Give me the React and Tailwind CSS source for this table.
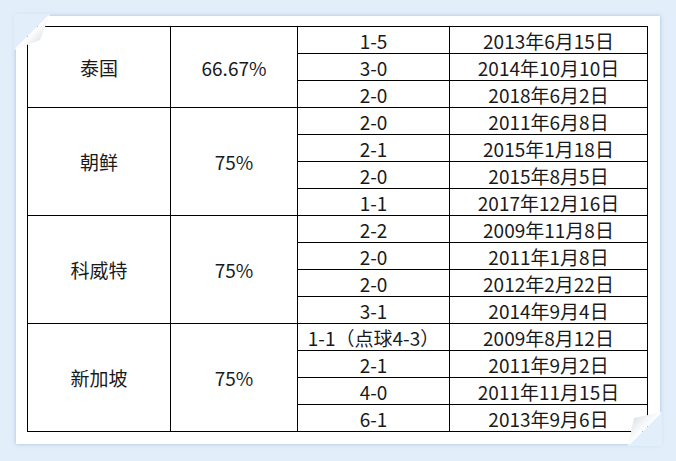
import React from 'react';

const groups = [
  { name: '泰国', rate: '66.67%', rows: [['1-5', '2013年6月15日'], ['3-0', '2014年10月10日'], ['2-0', '2018年6月2日']] },
  { name: '朝鲜', rate: '75%', rows: [['2-0', '2011年6月8日'], ['2-1', '2015年1月18日'], ['2-0', '2015年8月5日'], ['1-1', '2017年12月16日']] },
  { name: '科威特', rate: '75%', rows: [['2-2', '2009年11月8日'], ['2-0', '2011年1月8日'], ['2-0', '2012年2月22日'], ['3-1', '2014年9月4日']] },
  { name: '新加坡', rate: '75%', rows: [['1-1（点球4-3）', '2009年8月12日'], ['2-1', '2011年9月2日'], ['4-0', '2011年11月15日'], ['6-1', '2013年9月6日']] },
];

const cell = "border border-black text-center align-middle p-0 leading-none";

export default function App() {
  return (
    <div className="w-[676px] h-[461px] bg-[#e2eef9] p-4 overflow-hidden font-['Noto_Sans_CJK_SC',sans-serif]">
      <div className="relative w-[644px] h-[428px] bg-white shadow-[0_0_4px_rgba(120,160,200,0.6)] pl-[11px] pt-[10px]">
        <table className="border-collapse table-fixed text-[19px] text-[#1a1a1a]">
          <colgroup>
            <col className="w-[143px]" />
            <col className="w-[127px]" />
            <col className="w-[152px]" />
            <col className="w-[198px]" />
          </colgroup>
          <tbody>
            {groups.map((g) =>
              g.rows.map((r, i) => (
                <tr key={g.name + i} className="h-[27px]">
                  {i === 0 && (
                    <>
                      <td rowSpan={g.rows.length} className={cell}>{g.name}</td>
                      <td rowSpan={g.rows.length} className={cell}>{g.rate}</td>
                    </>
                  )}
                  <td className={cell}>{r[0]}</td>
                  <td className={cell}>{r[1]}</td>
                </tr>
              ))
            )}
          </tbody>
        </table>

        {/* page curl, top-left */}
        <svg className="absolute -left-[2px] -top-[2px]" width="38" height="38" viewBox="0 0 38 38">
          <defs>
            <linearGradient id="tl" x1="0" y1="0" x2="1" y2="1">
              <stop offset="0.5" stopColor="#ffffff" />
              <stop offset="1" stopColor="#c4ccd4" />
            </linearGradient>
          </defs>
          <polygon points="0,0 36,0 0,36" fill="#e2eef9" />
          <polygon points="36,0 0,36 26,26" fill="url(#tl)" />
        </svg>

        {/* page curl, bottom-right */}
        <svg className="absolute -right-[2px] -bottom-[2px]" width="36" height="36" viewBox="0 0 36 36">
          <defs>
            <linearGradient id="br" x1="1" y1="1" x2="0" y2="0">
              <stop offset="0.5" stopColor="#ffffff" />
              <stop offset="1" stopColor="#cdd5dd" />
            </linearGradient>
          </defs>
          <polygon points="36,2 36,36 2,36" fill="#e2eef9" />
          <polygon points="36,2 2,36 8,8" fill="url(#br)" />
        </svg>
      </div>
    </div>
  );
}
